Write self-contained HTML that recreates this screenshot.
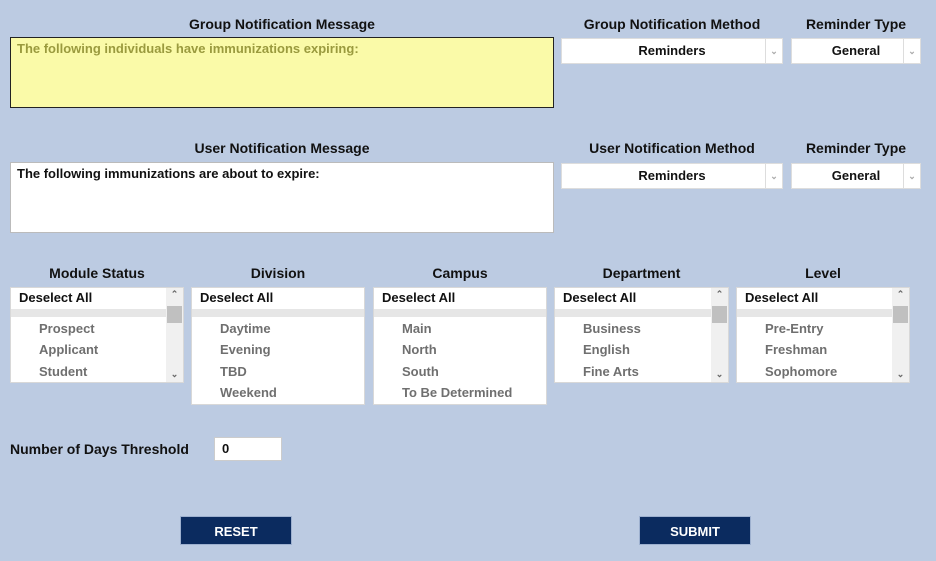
<!DOCTYPE html>
<html><head><style>
body{margin:0;width:936px;height:561px;background:#bccbe2;font-family:"Liberation Sans",Arial,sans-serif;font-weight:bold;font-size:14px;color:#111;position:relative;overflow:hidden}
.a{position:absolute}
.lbl{position:absolute;text-align:center;font-size:14px}
.ta{position:absolute;box-sizing:border-box;padding:3px 6px;font-size:13px}
.sel{position:absolute;box-sizing:border-box;background:#fff;border:1px solid #ddd;height:26px;font-size:13px;line-height:24px;text-align:center}
.sel .ar{position:absolute;right:0;top:0;width:16px;height:24px;border-left:1px solid #ddd;color:#aaa;font-size:9px;line-height:24px;text-align:center}
.lb{position:absolute;box-sizing:border-box;background:#fff;border:1px solid #d8d8d8;top:287px;font-size:13px;overflow:hidden}
.lb .d{position:absolute;left:8px;top:2px;color:#111}
.lb .g{position:absolute;left:0;top:21px;height:8px;background:#e6e6e6}
.lb .i{position:absolute;left:28px;color:#6f6f6f}
.sb{position:absolute;right:0;top:0;width:17px;bottom:0;background:#f0f0f0}
.sb .t{position:absolute;left:1px;top:18px;width:15px;height:17px;background:#c0c0c0}
.sb .u,.sb .w{position:absolute;left:0;width:17px;text-align:center;font-size:9px;color:#666}
.btn{position:absolute;background:#0b2b5f;color:#fff;font-size:13px;text-align:center;line-height:29px;height:29px;width:112px;top:516px;box-sizing:border-box;border:1px solid #9db0cf}
</style></head><body>
<div class="lbl" style="left:10px;width:544px;top:16px">Group Notification Message</div>
<div class="ta" style="left:10px;top:37px;width:544px;height:71px;background:#fafaa8;border:1px solid #222;color:#9a9a3e">The following individuals have immunizations expiring:</div>
<div class="lbl" style="left:561px;width:222px;top:16px">Group Notification Method</div>
<div class="lbl" style="left:791px;width:130px;top:16px">Reminder Type</div>
<div class="sel" style="left:561px;top:38px;width:222px">Reminders<div class="ar">&#8964;</div></div>
<div class="sel" style="left:791px;top:38px;width:130px">General<div class="ar">&#8964;</div></div>

<div class="lbl" style="left:10px;width:544px;top:140px">User Notification Message</div>
<div class="ta" style="left:10px;top:162px;width:544px;height:71px;background:#fff;border:1px solid #bbb;color:#111">The following immunizations are about to expire:</div>
<div class="lbl" style="left:561px;width:222px;top:140px">User Notification Method</div>
<div class="lbl" style="left:791px;width:130px;top:140px">Reminder Type</div>
<div class="sel" style="left:561px;top:163px;width:222px">Reminders<div class="ar">&#8964;</div></div>
<div class="sel" style="left:791px;top:163px;width:130px">General<div class="ar">&#8964;</div></div>

<div class="lbl" style="left:10px;width:174px;top:265px">Module Status</div>
<div class="lbl" style="left:191px;width:174px;top:265px">Division</div>
<div class="lbl" style="left:373px;width:174px;top:265px">Campus</div>
<div class="lbl" style="left:554px;width:175px;top:265px">Department</div>
<div class="lbl" style="left:736px;width:174px;top:265px">Level</div>

<div class="lb" style="left:10px;width:174px;height:96px"><div class="d">Deselect All</div><div class="g" style="width:157px"></div>
<div class="i" style="top:33px">Prospect</div><div class="i" style="top:54px">Applicant</div><div class="i" style="top:76px">Student</div>
<div class="sb"><div class="u" style="top:1px">&#8963;</div><div class="t"></div><div class="w" style="bottom:2px">&#8964;</div></div></div>

<div class="lb" style="left:191px;width:174px;height:118px"><div class="d">Deselect All</div><div class="g" style="width:174px"></div>
<div class="i" style="top:33px">Daytime</div><div class="i" style="top:54px">Evening</div><div class="i" style="top:76px">TBD</div><div class="i" style="top:97px">Weekend</div></div>

<div class="lb" style="left:373px;width:174px;height:118px"><div class="d">Deselect All</div><div class="g" style="width:174px"></div>
<div class="i" style="top:33px">Main</div><div class="i" style="top:54px">North</div><div class="i" style="top:76px">South</div><div class="i" style="top:97px">To Be Determined</div></div>

<div class="lb" style="left:554px;width:175px;height:96px"><div class="d">Deselect All</div><div class="g" style="width:158px"></div>
<div class="i" style="top:33px">Business</div><div class="i" style="top:54px">English</div><div class="i" style="top:76px">Fine Arts</div>
<div class="sb"><div class="u" style="top:1px">&#8963;</div><div class="t"></div><div class="w" style="bottom:2px">&#8964;</div></div></div>

<div class="lb" style="left:736px;width:174px;height:96px"><div class="d">Deselect All</div><div class="g" style="width:157px"></div>
<div class="i" style="top:33px">Pre-Entry</div><div class="i" style="top:54px">Freshman</div><div class="i" style="top:76px">Sophomore</div>
<div class="sb"><div class="u" style="top:1px">&#8963;</div><div class="t"></div><div class="w" style="bottom:2px">&#8964;</div></div></div>

<div class="a" style="left:10px;top:441px;font-size:14px">Number of Days Threshold</div>
<div class="a" style="left:214px;top:437px;width:68px;height:24px;box-sizing:border-box;background:#fff;border:1px solid #ccc;font-size:13px;line-height:22px;padding-left:7px">0</div>

<div class="btn" style="left:180px">RESET</div>
<div class="btn" style="left:639px">SUBMIT</div>
</body></html>
